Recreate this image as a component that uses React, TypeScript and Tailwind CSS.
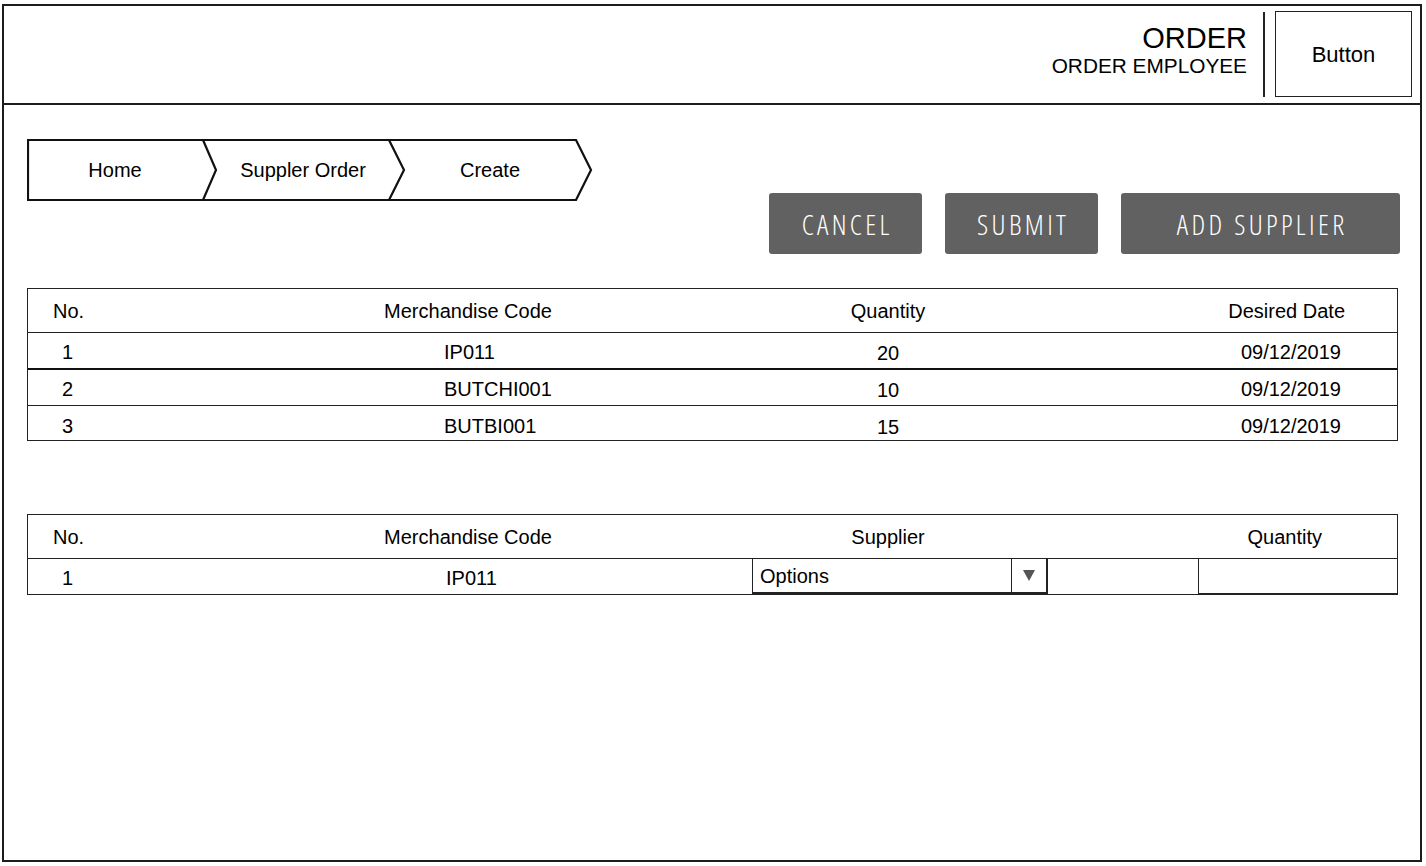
import React from "react";

const sans = { fontFamily: '"Liberation Sans", Arial, sans-serif' };

const orders = [
  { no: "1", code: "IP011", qty: "20", date: "09/12/2019" },
  { no: "2", code: "BUTCHI001", qty: "10", date: "09/12/2019" },
  { no: "3", code: "BUTBI001", qty: "15", date: "09/12/2019" },
];

const Breadcrumb = () => (
  <div className="relative w-[566px] h-[62px] shrink-0">
    <svg className="absolute inset-0" width="566" height="62" viewBox="0 0 566 62">
      <path
        d="M1 1 H549 L564 31 L549 61 H1 Z M176 1 L189 31 L176 61 M362 1 L377 31 L362 61"
        fill="white"
        stroke="#111"
        strokeWidth="2.2"
        strokeLinejoin="miter"
      />
    </svg>
    <div className="relative flex h-full items-center text-[20px] text-black">
      <div className="w-[176px] text-center">Home</div>
      <div className="w-[200px] text-center">Suppler Order</div>
      <div className="w-[174px] text-center">Create</div>
    </div>
  </div>
);

const ActionButton = ({ label, w }: { label: string; w: string }) => (
  <button
    className={`${w} h-[61px] rounded-[3px] bg-[#616161] text-white text-[28px] font-light tracking-[0.12em] pl-[0.12em]`}
    style={{ fontFamily: '"Open Sans", Lato, sans-serif', fontStretch: "condensed" }}
  >
    {label}
  </button>
);

export default function App() {
  return (
    <div className="bg-white w-[1426px] h-[866px] pt-[4px] pl-[2px]" style={sans}>
      <div className="w-[1420px] h-[858px] border-2 border-[#1c1c1c] flex flex-col">
        {/* header */}
        <div className="h-[99px] border-b-2 border-[#1c1c1c] flex items-start justify-end pr-[8px] pt-[5px]">
          <div className="flex flex-col items-end mt-[11px] mr-[16px] text-black">
            <div className="text-[29px] leading-[32px]">ORDER</div>
            <div className="text-[20.8px] leading-[24px]">ORDER EMPLOYEE</div>
          </div>
          <div className="w-[2px] h-[85px] mt-[1px] bg-[#222]" />
          <div className="ml-[10px] w-[137px] h-[86px] border-[1.5px] border-[#222] flex items-center justify-center text-[22px] text-black">
            Button
          </div>
        </div>

        {/* content */}
        <div className="pl-[23px] pr-[22px]">
          <div className="flex items-start mt-[34px]">
            <Breadcrumb />
            <div className="ml-auto mr-[-2px] mt-[54px] flex gap-[23px]">
              <ActionButton label="CANCEL" w="w-[153px]" />
              <ActionButton label="SUBMIT" w="w-[153px]" />
              <ActionButton label="ADD SUPPLIER" w="w-[279px]" />
            </div>
          </div>

          {/* orders table */}
          <div className="mt-[34px] border-[1.5px] border-[#222] text-[20px] text-black">
            <div className="grid grid-cols-[80px_720px_120px_1fr] h-[44px] items-center border-b border-[#222]">
              <div className="pl-[25px]">No.</div>
              <div className="text-center">Merchandise Code</div>
              <div className="text-center">Quantity</div>
              <div className="text-right pr-[52px]">Desired Date</div>
            </div>
            {orders.map((o, i) => (
              <div
                key={o.no}
                className={`grid grid-cols-[80px_720px_120px_1fr] items-center pt-[2px] ${
                  i === 0 ? "h-[37px] border-b-2 border-[#111]" : i === 1 ? "h-[36px] border-b border-[#222]" : "h-[34px] pt-[4px]"
                }`}
              >
                <div className="pl-[34px]">{o.no}</div>
                <div className="pl-[336px]">{o.code}</div>
                <div className="text-center pt-[2px]">{o.qty}</div>
                <div className="text-right pr-[56px]">{o.date}</div>
              </div>
            ))}
          </div>

          {/* supplier table */}
          <div className="mt-[73px] border-[1.5px] border-[#222] text-[20px] text-black">
            <div className="grid grid-cols-[80px_720px_120px_1fr] h-[44px] items-center border-b border-[#222]">
              <div className="pl-[25px]">No.</div>
              <div className="text-center">Merchandise Code</div>
              <div className="text-center">Supplier</div>
              <div className="text-right pr-[75px]">Quantity</div>
            </div>
            <div className="flex h-[35px] items-stretch">
              <div className="w-[80px] pl-[34px] flex items-center pt-[3px]">1</div>
              <div className="w-[644px] flex items-center pl-[338px] pt-[3px]">IP011</div>
              <div className="w-[296px] flex border-l border-b-2 border-[#222]">
                <div className="flex-1 pl-[7px] flex items-center">Options</div>
                <div className="w-[37px] border-l border-r-2 border-[#222] flex items-center justify-center">
                  <svg width="12" height="11" viewBox="0 0 12 11">
                    <polygon points="0,0 12,0 6,11" fill="#555" />
                  </svg>
                </div>
              </div>
              <div className="w-[151px] border-r border-[#222]" />
              <div className="flex-1 border-b border-[#222]" />
            </div>
          </div>
        </div>
      </div>
    </div>
  );
}
